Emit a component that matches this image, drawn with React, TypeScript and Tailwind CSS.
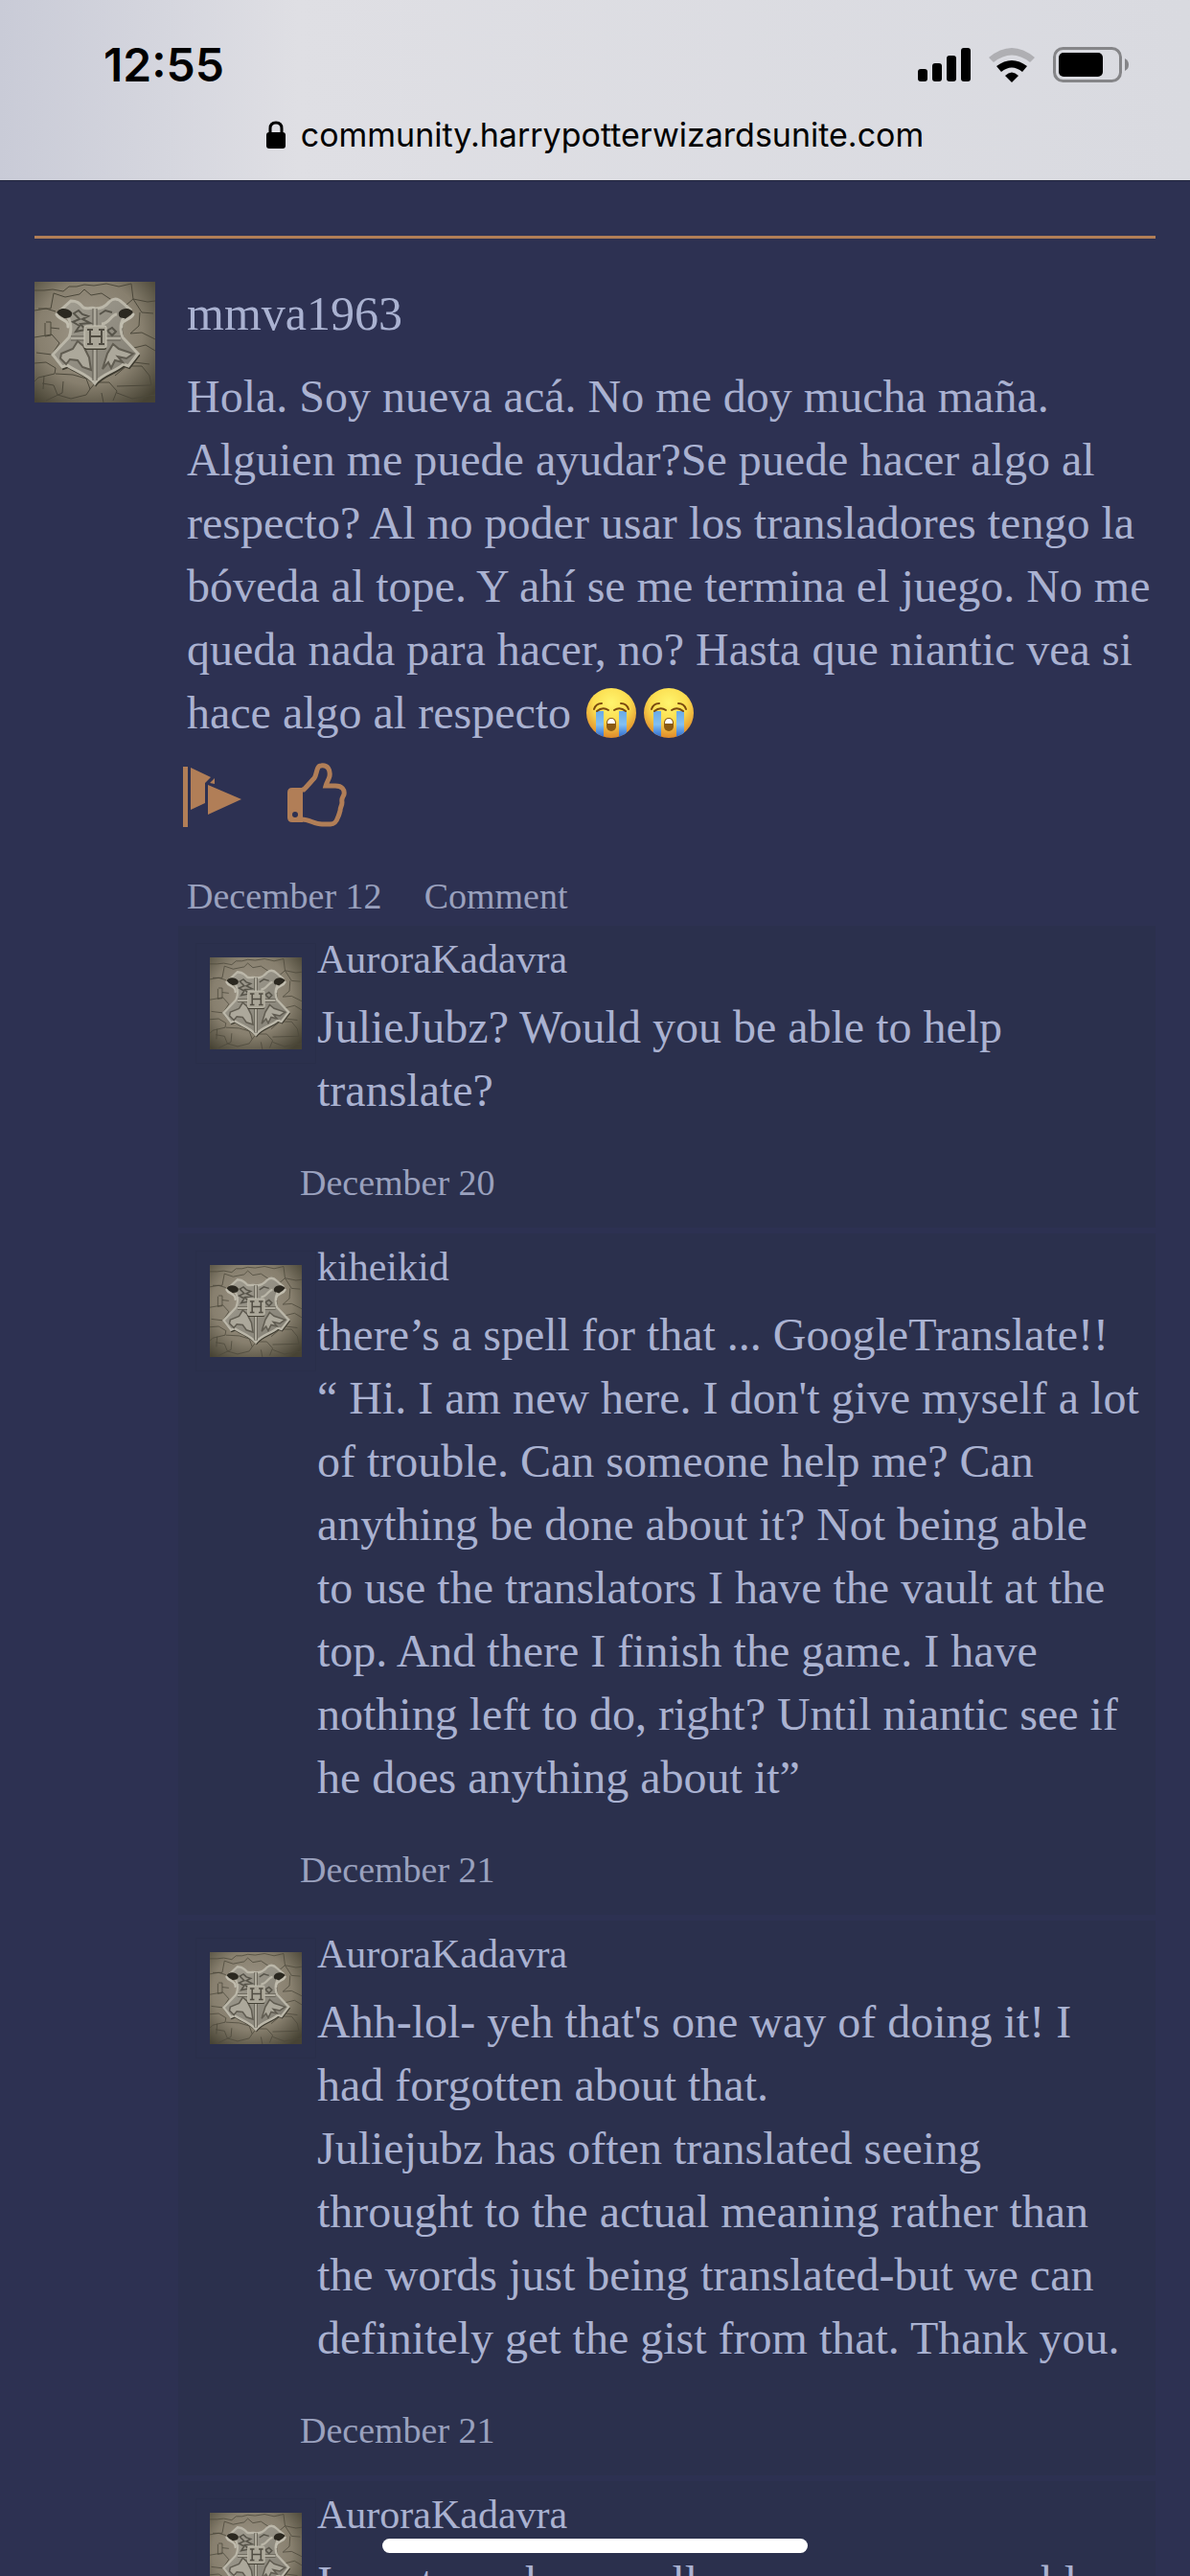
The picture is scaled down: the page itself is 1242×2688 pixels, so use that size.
const avatarStones = [
	'M0 9H10L19 8L30 10L36 5L44 5L52 3L62 4L75 2L88 5L101 2L103 18L96 24L82 20L70 12L59 14L52 8L47 13L32 16L20 12L17 28L4 28',
	'M103 18L118 21L126 20M103 18L112 32L124 33M110 32L109 46L100 54L112 53L126 60',
	'M0 30L12 28L22 31M12 42L17 42L17 56L11 57L11 43M17 48L26 49M0 58L18 55L26 64L18 76L2 74',
	'M0 85L12 84L22 90L21 96L4 100L0 104M22 96L40 97L54 101L58 112L54 118L38 122L24 118L20 108L8 106',
	'M58 112L64 105L78 105L86 114L82 124M86 116L102 122L126 118M84 98L96 88L112 88L120 98L122 108L86 109',
	'M30 104L29 116L12 124M100 70L116 66L126 72M104 84L120 86M10 98L9 112M70 116L72 126'
];

const shieldPath =
	'M38 20C44 20 47 22 51 27C56 29 60 26 64 28C69 28 74 26 78 21C82 17 87 17 92 22L100 29C90 38 88 48 92 58L108 75L98 88L93 86C84 94 70 96 63 106C55 96 44 94 34 87L29 89L19 76L36 58C40 48 38 37 28 29Z';

function Avatar({ className }: { className: string }) {
	return (
		<svg viewBox="0 0 126 126" className={className} role="img" aria-label="Avatar">
			<defs>
				<radialGradient id="stone" cx="0.46" cy="0.42" r="0.72">
					<stop offset="0" stopColor="#a0988a" />
					<stop offset="0.6" stopColor="#877f6e" />
					<stop offset="1" stopColor="#474334" />
				</radialGradient>
				<linearGradient id="shield" x1="0" y1="0" x2="1" y2="1">
					<stop offset="0" stopColor="#a29e92" />
					<stop offset="1" stopColor="#817d72" />
				</linearGradient>
			</defs>
			<rect width="126" height="126" fill="url(#stone)" />
			{avatarStones.map((d) => (
				<path key={d} d={d} fill="none" stroke="#4c483b" strokeWidth="1" />
			))}
			<path d={shieldPath} fill="#3d3a2f" stroke="#3d3a2f" strokeWidth="2" transform="translate(1 2)" />
			<path d={shieldPath} fill="url(#shield)" stroke="#bbb7a9" strokeWidth="3" />
			<path d="M63 28V103M38 59H90" stroke="#5d594e" strokeWidth="5" />
			<path d="M63 28V103M38 59H90" stroke="#aeaa9d" strokeWidth="3" />
			<path
				d="M23 33C25 26 35 27 39 32C40 37 36 38 31 38C28 36 26 35 23 33ZM103 33C101 26 91 27 88 32C87 37 90 38 95 38C98 36 100 35 103 33Z"
				fill="#2b2820"
			/>
			<path
				d="M23 34C25 40 36 39 35 47M103 34C101 40 90 39 91 47"
				fill="none"
				stroke="#c2beb0"
				strokeWidth="3"
				strokeLinecap="round"
			/>
			<path
				d="M41 33L46 30L50 34L56 36L50 39L58 43L48 44L53 50L43 52L47 46L40 42L47 39ZM68 34L74 30L81 32M76 51L81 48L85 52L81 56Z"
				fill="none"
				stroke="#57544a"
				strokeWidth="2"
			/>
			<path d="M70 44C78 44 80 34 86 34" fill="none" stroke="#bbb7a9" strokeWidth="3" />
			<path
				d="M28 75L40 70L45 62L51 67L57 79L59 92L50 89L45 82L37 81L33 86L27 80ZM82 65L88 70L103 75L96 80L87 78L92 84L84 82L80 90L77 84L71 91L76 75Z"
				fill="#aca89b"
				stroke="#605c51"
				strokeWidth="2"
			/>
			<rect x="52" y="47" width="23" height="24" rx="2" fill="#3d3a2f" />
			<rect x="52" y="46" width="23" height="23" rx="2" fill="#aaa698" stroke="#cbc7b8" strokeWidth="1" />
			<path d="M55 50H61M67 50H73M55 65H61M67 65H73M58 50V65M70 50V65M58 57H70" stroke="#504c42" strokeWidth="2" />
		</svg>
	);
}

function CryingFace() {
	return (
		<svg viewBox="0 0 52 52" className="mx-1 inline-block h-[52px] w-[52px] align-[-10px]" role="img" aria-label="😭">
			<defs>
				<radialGradient id="face" cx="0.5" cy="0.3" r="0.72">
					<stop offset="0" stopColor="#fff56e" />
					<stop offset="0.5" stopColor="#fbdd50" />
					<stop offset="1" stopColor="#dd8528" />
				</radialGradient>
				<linearGradient id="tear" x1="0" y1="0" x2="0" y2="1">
					<stop offset="0" stopColor="#6aaae6" />
					<stop offset="0.5" stopColor="#82c0f2" />
					<stop offset="1" stopColor="#2a66cc" />
				</linearGradient>
				<clipPath id="face-clip">
					<circle cx="26" cy="26" r="26" />
				</clipPath>
			</defs>
			<circle cx="26" cy="26" r="26" fill="url(#face)" />
			<path d="M10 24H18V52H10ZM34 24H42V52H34Z" fill="url(#tear)" clipPath="url(#face-clip)" />
			<path
				d="M8 22Q10 16 16 16M44 22Q42 16 36 16M11 24Q17 19 23 23M41 24Q35 19 29 23"
				fill="none"
				stroke="#7a4a10"
				strokeWidth="2"
				strokeLinecap="round"
			/>
			<rect x="21" y="31" width="10" height="14" rx="5" fill="#8a5a14" />
			<path d="M22 37Q22 32 26 32Q30 32 30 37Z" fill="#fff" />
		</svg>
	);
}

function FlagIcon() {
	return (
		<svg viewBox="0 0 61 63" className="h-[63px] w-[61px]" fill="#b17e57" aria-hidden="true">
			<path d="M0 0H5V63H0ZM8 1L29 11L23 17V38L8 45ZM33 12V18L28 17ZM26 19L61 34L26 50Z" />
		</svg>
	);
}

function ThumbIcon() {
	return (
		<svg viewBox="0 0 62 67" className="h-[67px] w-[62px]" aria-hidden="true">
			<path d="M5 26H16V62H5Q0 62 0 57V31Q0 26 5 26Z" fill="#b17e57" />
			<circle cx="8" cy="54" r="3" fill="#2d3152" />
			<path
				d="M15 28H17C22 23 25 19 28 16C31 12 30 3 35 3C42 2 45 7 44 14C43 18 41 20 40 24H50C57 24 60 28 59 33C58 36 56 37 57 41C57 45 55 46 55 50C54 53 54 54 53 56C51 62 49 64 45 64H36C28 64 23 59 15 59"
				fill="none"
				stroke="#b17e57"
				strokeWidth="5"
			/>
		</svg>
	);
}

function StatusIcons() {
	return (
		<div className="flex items-center gap-[19px]">
			<svg viewBox="0 0 55 36" className="h-9 w-[55px]" aria-hidden="true">
				<rect x="0" y="22" width="10" height="13" rx="3" />
				<rect x="15" y="16" width="10" height="19" rx="3" />
				<rect x="30" y="8" width="10" height="27" rx="3" />
				<rect x="45" y="0" width="10" height="35" rx="3" />
			</svg>
			<svg viewBox="0 0 48 36" className="h-9 w-12" aria-hidden="true">
				<path d="M0 10Q24 -10 48 10L43 15Q24 0 5 15Z" fill="#afafb3" />
				<path d="M8 19Q24 7 40 19L35 25Q24 16 13 25Z" />
				<path d="M17 29Q24 22 31 29L24 36Z" />
			</svg>
			<svg viewBox="0 0 79 38" className="h-[38px] w-[79px]" aria-hidden="true">
				<rect x="1.5" y="1.5" width="69" height="34" rx="9" fill="none" stroke="#858588" strokeWidth="3" />
				<rect x="6" y="6" width="46" height="25" rx="5" />
				<path d="M75 12Q79 14 79 18.500Q79 23 75 25Z" fill="#858588" />
			</svg>
		</div>
	);
}

type Reply = {
	author: string;
	date: string;
	text: string;
};

const replies: Reply[] = [
	{
		author: 'AuroraKadavra',
		date: 'December 20',
		text: 'JulieJubz? Would you be able to help\ntranslate?'
	},
	{
		author: 'kiheikid',
		date: 'December 21',
		text: "there’s a spell for that ... GoogleTranslate!!\n“ Hi. I am new here. I don't give myself a lot\nof trouble. Can someone help me? Can\nanything be done about it? Not being able\nto use the translators I have the vault at the\ntop. And there I finish the game. I have\nnothing left to do, right? Until niantic see if\nhe does anything about it”"
	},
	{
		author: 'AuroraKadavra',
		date: 'December 21',
		text: "Ahh-lol- yeh that's one way of doing it! I\nhad forgotten about that.\nJuliejubz has often translated seeing\nthrought to the actual meaning rather than\nthe words just being translated-but we can\ndefinitely get the gist from that. Thank you."
	},
	{
		author: 'AuroraKadavra',
		date: 'December 21',
		text: 'I want you here really as you are now able'
	}
];

function ReplyItem({ reply }: { reply: Reply }) {
	return (
		<li className="bg-[#2b304d] py-[18px] pr-4 pl-[18px]">
			<div className="flex">
				<div className="h-[126px] w-[126px] shrink-0 border border-[#292e4a] p-[14px]">
					<Avatar className="h-24 w-24" />
				</div>
				<div className="min-w-0 grow pl-px">
					<a href="#profile" className="block h-[55px] text-[42px] leading-[35px] text-[#aab2d1]">
						{reply.author}
					</a>
					<p className="text-[48px] leading-[66px] whitespace-pre text-[#aab2d1]">{reply.text}</p>
				</div>
			</div>
			<time className="mt-[35px] block pl-[109px] text-[38px] leading-[57px] text-[#9aa1be]">{reply.date}</time>
		</li>
	);
}

export default function App() {
	return (
		<div className="h-screen overflow-hidden bg-[#2d3152] font-['Liberation_Serif',serif]">
			<header className="h-[189px] border-b border-[#20243c] bg-linear-to-r from-[#c9cbd7] via-[#dfdfe4] via-25% to-[#d9dae0] pt-10 font-['Inter',sans-serif] text-black">
				<div className="flex h-14 items-center justify-between pr-16 pl-[108px]">
					<time className="text-[48px] leading-[56px] font-semibold">12:55</time>
					<StatusIcons />
				</div>
				<div className="mt-5 flex items-center justify-center gap-4">
					<svg viewBox="0 0 20 30" className="h-[30px] w-5" aria-hidden="true">
						<rect x="0" y="12" width="20" height="17" rx="3" />
						<path d="M4 13V8Q4 2 10 2Q16 2 16 8V13" fill="none" stroke="#000" strokeWidth="3" />
					</svg>
					<span className="text-[34px] leading-[50px]">community.harrypotterwizardsunite.com</span>
				</div>
			</header>
			<main className="px-9 pt-[57px]">
				<hr className="border-t-[3px] border-[#b17e57]" />
				<article className="mt-[45px]">
					<div className="flex gap-[33px]">
						<Avatar className="h-[126px] w-[126px] shrink-0" />
						<div className="min-w-0 grow text-[#aab2d1]">
							<a href="#profile" className="block text-[50px] leading-[66px]">
								mmva1963
							</a>
							<p className="mt-[21px] text-[48px] leading-[66px] whitespace-pre">
								{
									'Hola. Soy nueva acá. No me doy mucha maña.\nAlguien me puede ayudar?Se puede hacer algo al\nrespecto? Al no poder usar los transladores tengo la\nbóveda al tope. Y ahí se me termina el juego. No me\nqueda nada para hacer, no? Hasta que niantic vea si\nhace algo al respecto '
								}
								<CryingFace />
								<CryingFace />
							</p>
						</div>
					</div>
					<div className="mt-[18px] flex h-[68px] gap-12 pl-[155px]">
						<button type="button" aria-label="Flag" className="pt-1">
							<FlagIcon />
						</button>
						<button type="button" aria-label="Like">
							<ThumbIcon />
						</button>
					</div>
					<div className="mt-[42px] flex gap-11 pl-[159px] text-[38px] leading-[60px] text-[#9aa1be]">
						<time>December 12</time>
						<a href="#comment">Comment</a>
					</div>
					<ul className="mt-px ml-[150px] space-y-[6px]">
						{replies.map((reply, i) => (
							<ReplyItem key={i} reply={reply} />
						))}
					</ul>
				</article>
			</main>
			<div className="fixed bottom-6 left-1/2 h-[15px] w-[444px] -translate-x-1/2 rounded-full bg-white" />
		</div>
	);
}
